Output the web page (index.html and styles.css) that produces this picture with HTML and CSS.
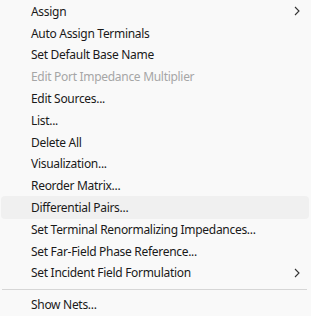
FILE: index.html
```html
<!DOCTYPE html>
<html lang="en">
<head>
    <meta charset="UTF-8">
    <meta name="viewport" content="width=device-width, initial-scale=1.0">
    <title>Excitations menu</title>
    <link rel="stylesheet" href="styles.css">
</head>
<body>
    <div class="menu">
        <ul class="menu-list">
            <li class="menu-item has-sub">
                <span class="label">Assign</span>
                <svg class="arrow" width="6" height="10" viewBox="0 0 6 10"><path d="M1 1 L5 5 L1 9" fill="none" stroke="#333" stroke-width="1.1"/></svg>
            </li>
            <li class="menu-item"><span class="label">Auto Assign Terminals</span></li>
            <li class="menu-item"><span class="label">Set Default Base Name</span></li>
            <li class="menu-item disabled"><span class="label">Edit Port Impedance Multiplier</span></li>
            <li class="menu-item"><span class="label">Edit Sources...</span></li>
            <li class="menu-item"><span class="label">List...</span></li>
            <li class="menu-item"><span class="label">Delete All</span></li>
            <li class="menu-item"><span class="label">Visualization...</span></li>
            <li class="menu-item"><span class="label">Reorder Matrix...</span></li>
            <li class="menu-item hover"><span class="label">Differential Pairs...</span></li>
            <li class="menu-item"><span class="label">Set Terminal Renormalizing Impedances...</span></li>
            <li class="menu-item"><span class="label">Set Far-Field Phase Reference...</span></li>
            <li class="menu-item has-sub">
                <span class="label">Set Incident Field Formulation</span>
                <svg class="arrow" width="6" height="10" viewBox="0 0 6 10"><path d="M1 1 L5 5 L1 9" fill="none" stroke="#333" stroke-width="1.1"/></svg>
            </li>
        </ul>
        <div class="separator"></div>
        <ul class="menu-list">
            <li class="menu-item"><span class="label">Show Nets...</span></li>
        </ul>
    </div>
</body>
</html>
```

FILE: styles.css
```css
* {
    padding: 0;
    margin: 0;
    box-sizing: border-box;
}
body {
    background-color: #F9F9F9;
    font-family: "Noto Sans", "Open Sans", sans-serif;
    font-size: 12px;
    letter-spacing: -0.3px;
    color: #1A1A1A;
}
.menu {
    width: 311px;
    height: 316px;
    overflow: hidden;
    padding-top: 0.5px;
}
.menu-list {
    list-style: none;
}
.menu-item {
    display: flex;
    align-items: center;
    height: 21.8px;
    padding: 0 10px 0 31px;
    position: relative;
}
.menu-item .label {
    flex-grow: 1;
    white-space: nowrap;
    position: relative;
}
.menu-item .arrow {
    position: relative;
    margin-right: 1px;
}
.menu-item.disabled {
    color: #A6A6A6;
}
.menu-item.hover::before {
    content: "";
    position: absolute;
    left: 1px;
    right: 2px;
    top: -1px;
    bottom: -1px;
    background-color: #F0F0F0;
    border-radius: 4px;
}
.separator {
    height: 1px;
    background-color: #D6D6D6;
    margin: 5.5px 4px 3px 2px;
}
```
